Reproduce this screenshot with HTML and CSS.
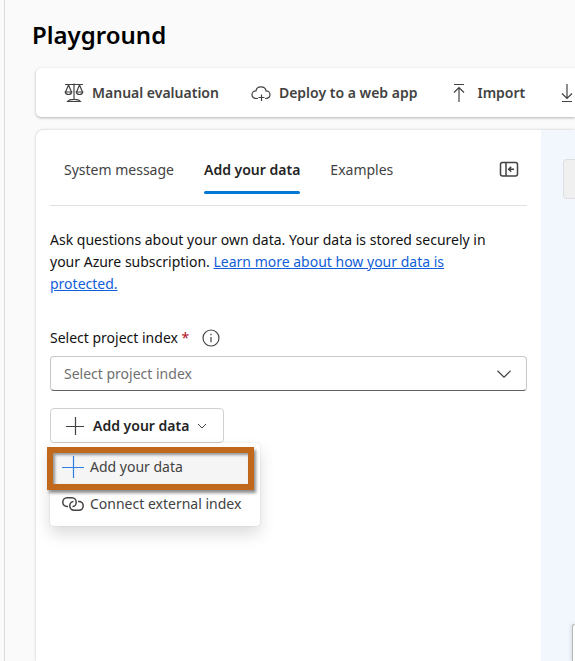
FILE: index.html
```html
<!DOCTYPE html>
<html lang="en">
<head>
<meta charset="utf-8">
<meta name="viewport" content="width=device-width, initial-scale=1">
<title>Playground</title>
<link rel="stylesheet" href="styles.css">
</head>
<body>
<main class="page">
  <h1 class="title">Playground</h1>

  <div class="toolbar">
    <button class="tool" type="button">
      <svg class="icon" viewBox="0 0 20 20" aria-hidden="true"><path d="M1 1.500H19M10 0.500V17M4.500 2L1.500 9M4.500 2L7.500 9M15.500 2L12.500 9M15.500 2L18.500 9M1.200 9H7.800Q7.200 11.500 4.500 11.500T1.200 9ZM12.200 9H18.800Q18.200 11.500 15.500 11.500T12.200 9ZM3.500 18.500H16.500Q15 16.300 10 16.300T3.500 18.500Z"/></svg>
      Manual evaluation
    </button>
    <button class="tool" type="button">
      <svg class="icon" viewBox="0 0 20 20" aria-hidden="true"><path d="M7 15.500H5.500C2.800 15.500 1 13.800 1 11.600S2.800 7.800 5 7.800C5.300 5.300 7.300 3.800 10 3.800S14.700 5.300 15 7.800C17.200 7.800 19 9.400 19 11.600S17.200 15.500 14.500 15.500H14M10.500 11.500V18M7.500 14.500H13.500"/></svg>
      Deploy to a web app
    </button>
    <button class="tool" type="button">
      <svg class="icon" viewBox="0 0 20 20" aria-hidden="true"><path d="M5 1.500H15M10 19V4.500M5 9.500L10 4.500L15 9.500"/></svg>
      Import
    </button>
    <button class="tool" type="button" aria-label="Export">
      <svg class="icon" viewBox="0 0 20 20" aria-hidden="true"><path d="M5 18.500H15M10 1V15.500M5 10.500L10 15.500L15 10.500"/></svg>
    </button>
  </div>

  <div class="workspace">
    <section class="setup">
      <div class="tabbar">
        <div class="tabs" role="tablist">
          <button class="tab" type="button" role="tab">System message</button>
          <button class="tab tab-active" type="button" role="tab" aria-selected="true">Add your data</button>
          <button class="tab" type="button" role="tab">Examples</button>
        </div>
        <button class="collapse" type="button" aria-label="Collapse panel">
          <svg class="icon icon-strong" viewBox="0 0 20 20" aria-hidden="true"><rect x="1.500" y="3.500" width="17" height="13.500" rx="2"/><path d="M7 3.500V17M15 10.200H10M12.200 7.700L9.700 10.200L12.200 12.700"/></svg>
        </button>
      </div>

      <p class="intro">Ask questions about your own data. Your data is stored securely in your Azure subscription. <a href="#protection">Learn more about how your data is protected.</a></p>

      <div class="label-row">
        <label for="index">Select project index <span class="required">*</span></label>
        <svg class="info" viewBox="0 0 20 20" aria-hidden="true"><circle cx="10" cy="10" r="8"/><path d="M10 9V14.200M10 5.800V7.300"/></svg>
      </div>
      <div class="field">
        <select id="index" class="select"><option>Select project index</option></select>
        <svg class="field-chevron" viewBox="0 0 14 8" aria-hidden="true"><path d="M0.500 0.800L7 7.200L13.500 0.800"/></svg>
      </div>

      <div class="menu-anchor">
        <button class="add" type="button" aria-haspopup="menu" aria-expanded="true">
          <svg class="icon" viewBox="0 0 20 20" aria-hidden="true"><path d="M10.500 1V19M1 10.500H19"/></svg>
          Add your data
          <svg class="add-chevron" viewBox="0 0 10 6" aria-hidden="true"><path d="M1 1L5 5L9 1"/></svg>
        </button>
        <div class="menu" role="menu">
          <button class="item item-marked" type="button" role="menuitem">
            <svg class="item-icon item-plus" viewBox="0 0 22 22" aria-hidden="true"><path d="M11.500 0V22M0 11.500H22"/></svg>
            Add your data
          </button>
          <button class="item" type="button" role="menuitem">
            <svg class="item-icon item-link" viewBox="0 0 22 22" aria-hidden="true"><path d="M6 13.500H5C2.500 13.500 0.800 11.600 0.800 9.200S2.500 4.800 5 4.800H10C12.500 4.800 14.200 6.800 14.200 9.200S12.500 13.500 10.500 13.500M16 8.500H17C19.500 8.500 21.200 10.400 21.200 12.800S19.500 17.200 17 17.200H12C9.500 17.200 7.800 15.200 7.800 12.800S9.500 8.500 11.500 8.500"/></svg>
            Connect external index
          </button>
        </div>
      </div>
    </section>

    <section class="chat" aria-label="Chat">
      <button class="chat-clear" type="button" aria-label="Clear chat" disabled></button>
      <div class="chat-box"></div>
    </section>
  </div>
</main>
</body>
</html>
```
FILE: styles.css
```css
* {
  box-sizing: border-box;
}

body {
  margin: 0;
  overflow: hidden;
  background: #fafafa;
  color: #111;
  font: 14px/22px "Noto Sans", "Open Sans", sans-serif;
}

button,
select {
  margin: 0;
  padding: 0;
  border: 0;
  background: none;
  color: inherit;
  font: inherit;
}

svg {
  flex: none;
  fill: none;
  stroke: #424242;
  stroke-width: 1.2;
}

.icon {
  width: 20px;
  height: 20px;
}

.icon-strong {
  stroke-width: 1.5;
}

.page {
  display: flex;
  flex-direction: column;
  min-height: 100vh;
  margin-left: 4px;
  padding: 18px 0 0 28px;
  border-left: 1px solid #dcdcdc;
}

.title {
  margin: 0 0 16px -1px;
  color: #000;
  font-size: 24px;
  line-height: 34px;
  font-weight: 600;
}

.toolbar {
  display: flex;
  align-items: center;
  gap: 32px;
  height: 49px;
  margin-left: 3px;
  padding-left: 28px;
  overflow: hidden;
  border-radius: 5px 0 0 5px;
  background: #fff;
  box-shadow: 0 1px 3px rgba(0, 0, 0, 0.28);
}

.tool {
  display: flex;
  flex: none;
  align-items: center;
  gap: 8px;
  color: #424242;
  font-weight: 600;
}

.workspace {
  display: flex;
  flex: 1;
  margin: 13px 0 0 3px;
  border-radius: 8px 0 0 0;
  background: #fff;
  box-shadow: 0 0 3px rgba(0, 0, 0, 0.22);
}

.setup {
  flex: 1;
  padding: 16px 14px 0;
}

.tabbar {
  display: flex;
  justify-content: space-between;
  align-items: flex-start;
  height: 60px;
  padding: 0 8px 0 14px;
  border-bottom: 1px solid #e0e0e0;
}

.tabs {
  display: flex;
  gap: 30px;
}

.tab {
  height: 48px;
  border-bottom: 3px solid transparent;
  border-top: 3px solid transparent;
  color: #424242;
}

.tab-active {
  position: relative;
  color: #242424;
  font-weight: 600;
}

.tab-active::after {
  content: "";
  position: absolute;
  right: 0;
  bottom: -3px;
  left: 0;
  height: 3px;
  border-radius: 2px;
  background: #0078d4;
}

.collapse {
  display: flex;
  padding-top: 13px;
}

.intro {
  margin: 23px 0 32px;
  padding-right: 20px;
}

.intro a {
  color: #115ed8;
}

.label-row {
  display: flex;
  align-items: center;
  gap: 12px;
  margin-bottom: 7px;
}

.required {
  color: #b10e1c;
}

.info {
  width: 20px;
  height: 20px;
}

.field {
  position: relative;
  display: flex;
}

.select {
  width: 100%;
  height: 35px;
  padding: 0 40px 0 13px;
  border: 1px solid #c8c8c8;
  border-bottom-color: #616161;
  border-radius: 4px;
  appearance: none;
  background: #fff;
  color: #707070;
}

.field-chevron {
  position: absolute;
  top: 14px;
  right: 16px;
  width: 14px;
  height: 8px;
}

.menu-anchor {
  position: relative;
  display: inline-block;
  margin-top: 17px;
}

.add {
  display: flex;
  align-items: center;
  gap: 8px;
  height: 35px;
  padding: 0 16px 0 14px;
  border: 1px solid #d1d1d1;
  border-radius: 4px;
  background: #fff;
  color: #242424;
  font-weight: 600;
}

.add-chevron {
  width: 10px;
  height: 6px;
  stroke-width: 1;
}

.menu {
  position: absolute;
  top: 35px;
  left: 0;
  padding: 5px 5px 5px 0;
  border-radius: 4px;
  background: #fff;
  box-shadow: 0 8px 16px rgba(0, 0, 0, 0.14), 0 0 2px rgba(0, 0, 0, 0.12);
}

.item {
  display: flex;
  align-items: center;
  gap: 6px;
  width: 100%;
  height: 35px;
  padding: 0 14px 0 12px;
  color: #424242;
  white-space: nowrap;
}

.item-icon {
  width: 22px;
  height: 22px;
}

.item-marked {
  min-width: calc(100% + 2px);
  height: 43px;
  margin: -1px 1px -4px -3px;
  padding: 0 0 4px 9px;
  border: 6px solid #c0681c;
  background: #f5f5f5;
  box-shadow: 2px 3px 3px rgba(0, 0, 0, 0.45), inset 2px 2px 3px rgba(0, 0, 0, 0.4);
}

.item-plus {
  stroke: #2f7fe0;
}

.item-link {
  stroke-width: 1.5;
}

.chat {
  display: flex;
  flex-direction: column;
  justify-content: space-between;
  align-items: flex-end;
  width: 34px;
  padding-top: 29px;
  overflow: hidden;
  background: #f2f7fe;
}

.chat-clear {
  width: 12px;
  height: 40px;
  border: 1px solid #dedede;
  border-right: 0;
  border-radius: 4px 0 0 4px;
  background: #f0f0f0;
}

.chat-box {
  width: 3px;
  height: 37px;
  border: 1px solid #b8b8b8;
  border-width: 1px 0 0 1px;
  border-radius: 4px 0 0 0;
  background: #fff;
  box-shadow: 0 0 4px rgba(0, 0, 0, 0.2);
}
```
